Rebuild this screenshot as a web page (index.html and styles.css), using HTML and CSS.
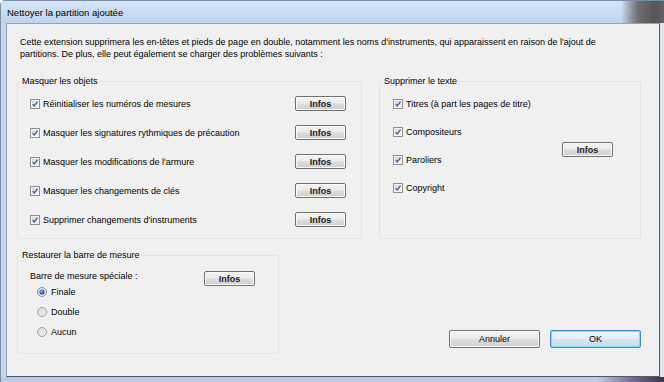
FILE: index.html
```html
<!DOCTYPE html>
<html lang="fr">
<head>
    <meta charset="UTF-8">
    <title>Nettoyer la partition ajoutée</title>
    <link rel="stylesheet" href="styles.css">
</head>
<body>

    <!-- Formes partagées : case à cocher et boutons radio façon Windows 7 -->
    <svg class="defs" width="0" height="0">
        <defs>
            <linearGradient id="boxFill" x1="0" y1="0" x2="1" y2="1">
                <stop offset="0" stop-color="#d3d6da"/>
                <stop offset="1" stop-color="#f7f7f7"/>
            </linearGradient>
            <radialGradient id="dotFill" cx="0.4" cy="0.35" r="0.7">
                <stop offset="0" stop-color="#8fc3f0"/>
                <stop offset="0.5" stop-color="#2f6fbe"/>
                <stop offset="1" stop-color="#1b4a8a"/>
            </radialGradient>
            <symbol id="chk" viewBox="0 0 10 10">
                <rect x="0.5" y="0.5" width="9" height="9" fill="#f4f4f4" stroke="#8e8f8f"/>
                <rect x="2" y="2" width="6" height="6" fill="url(#boxFill)"/>
                <path d="M2.6 5.1 L4.3 7 L7.5 2.6" fill="none" stroke="#4a5f97" stroke-width="1.4"/>
            </symbol>
            <symbol id="radio" viewBox="0 0 10 10">
                <circle cx="5" cy="5" r="4.5" fill="url(#boxFill)" stroke="#a0a0a0"/>
            </symbol>
            <symbol id="radio-on" viewBox="0 0 10 10">
                <circle cx="5" cy="5" r="4.5" fill="url(#boxFill)" stroke="#8e8f8f"/>
                <circle cx="5" cy="5" r="2.6" fill="url(#dotFill)"/>
            </symbol>
        </defs>
    </svg>

    <div class="window">
        <div class="titlebar">Nettoyer la partition ajoutée</div>

        <div class="client">
            <p class="intro">Cette extension supprimera les en-têtes et pieds de page en double, notamment les noms d'instruments, qui apparaissent en raison de l'ajout de<br>partitions. De plus, elle peut également se charger des problèmes suivants :</p>

            <div class="top-row">
                <fieldset class="group group-objects">
                    <legend>Masquer les objets</legend>
                    <div class="opt-row">
                        <label class="check"><svg class="box"><use href="#chk"/></svg>Réinitialiser les numéros de mesures</label>
                        <button class="btn btn-info">Infos</button>
                    </div>
                    <div class="opt-row">
                        <label class="check"><svg class="box"><use href="#chk"/></svg>Masquer les signatures rythmiques de précaution</label>
                        <button class="btn btn-info">Infos</button>
                    </div>
                    <div class="opt-row">
                        <label class="check"><svg class="box"><use href="#chk"/></svg>Masquer les modifications de l'armure</label>
                        <button class="btn btn-info">Infos</button>
                    </div>
                    <div class="opt-row">
                        <label class="check"><svg class="box"><use href="#chk"/></svg>Masquer les changements de clés</label>
                        <button class="btn btn-info">Infos</button>
                    </div>
                    <div class="opt-row">
                        <label class="check"><svg class="box"><use href="#chk"/></svg>Supprimer changements d'instruments</label>
                        <button class="btn btn-info">Infos</button>
                    </div>
                </fieldset>

                <fieldset class="group group-text">
                    <legend>Supprimer le texte</legend>
                    <div class="text-body">
                        <div class="text-list">
                            <label class="check text-row"><svg class="box"><use href="#chk"/></svg>Titres (à part les pages de titre)</label>
                            <label class="check text-row"><svg class="box"><use href="#chk"/></svg>Compositeurs</label>
                            <label class="check text-row"><svg class="box"><use href="#chk"/></svg>Paroliers</label>
                            <label class="check text-row"><svg class="box"><use href="#chk"/></svg>Copyright</label>
                        </div>
                        <button class="btn btn-info btn-text">Infos</button>
                    </div>
                </fieldset>
            </div>

            <div class="bottom-row">
                <fieldset class="group group-bar">
                    <legend>Restaurer la barre de mesure</legend>
                    <div class="bar-body">
                        <div class="bar-list">
                            <div class="bar-label">Barre de mesure spéciale :</div>
                            <label class="radio-row"><svg class="box"><use href="#radio-on"/></svg>Finale</label>
                            <label class="radio-row"><svg class="box"><use href="#radio"/></svg>Double</label>
                            <label class="radio-row"><svg class="box"><use href="#radio"/></svg>Aucun</label>
                        </div>
                        <button class="btn btn-info btn-bar">Infos</button>
                    </div>
                </fieldset>

                <div class="actions">
                    <button class="btn btn-wide">Annuler</button>
                    <button class="btn btn-wide btn-default">OK</button>
                </div>
            </div>
        </div>
    </div>

</body>
</html>
```

FILE: styles.css
```css
/* Fenêtre et cadre Aero */
body {
    margin: 0;
    font-family: 'Liberation Sans', Arial, sans-serif;
    font-size: 9px;
    color: #000;
    overflow: hidden;
}

.defs {
    position: absolute;
}

.window {
    width: 664px;
    height: 382px;
    box-sizing: border-box;
    display: flex;
    flex-direction: column;
    border-top: 1px solid #7d8fa5;
    border-left: 1px solid #7d8fa5;
    border-top-left-radius: 5px;
    background:
        linear-gradient(to right, #b9cde6 0%, #b9cde6 90%, #6c5d8c 96%, #3b3152 100%) bottom / 100% 5px no-repeat,
        linear-gradient(to right, #c4d8ee 0%, #bed2ea 98%, #e2e6ea 99%) ;
}

.titlebar {
    height: 21px;
    flex-shrink: 0;
    padding: 1px 0 0 6px;
    font-size: 9.5px;
    line-height: 21px;
    background:
        linear-gradient(to right, rgba(255,255,255,0) 0%, rgba(255,255,255,0) 93.5%, #707070 96%, #555 98.5%, #626262 100%),
        linear-gradient(#d6e5f4 0%, #c6daef 60%, #bfd4ec 100%);
}

.client {
    flex: 1;
    margin: 0 4px 5px 5px;
    background: #f0f0f0;
    border: 1px solid;
    border-color: #93a3b5 #525c66 #505a64 #93a3b5;
    display: flex;
    flex-direction: column;
    padding: 12px 0 0 0;
}

/* Texte d'introduction */
.intro {
    margin: 0 0 15px 13px;
    line-height: 12px;
}

/* Cadres de groupe */
.group {
    margin: 0;
    min-width: 0;
    border: 1px solid #dfe4e8;
    border-radius: 3px;
    padding: 2px 15px 4px 3px;
}

.group legend {
    padding: 0 1px;
    line-height: 12px;
}

.top-row {
    display: flex;
    gap: 17px;
    margin-left: 10px;
}

.group-objects {
    width: 345px;
    box-sizing: border-box;
}

.group-text {
    width: 262px;
    box-sizing: border-box;
    padding: 3px 27px 4px 3px;
}

/* Lignes de cases à cocher */
.opt-row {
    height: 29px;
    display: flex;
    align-items: center;
    justify-content: space-between;
    padding-left: 9px;
}

.check {
    display: flex;
    align-items: center;
    gap: 3px;
}

.box {
    width: 10px;
    height: 10px;
    flex-shrink: 0;
}

.text-body {
    display: flex;
    justify-content: space-between;
    align-items: flex-start;
    padding-left: 10px;
}

.text-row {
    height: 28px;
}

.btn-text {
    margin-top: 52px;
}

/* Barre de mesure */
.bottom-row {
    display: flex;
    margin: 10px 18px 0 10px;
}

.group-bar {
    width: 262px;
    box-sizing: border-box;
    padding: 9px 23px 11px 3px;
}

.bar-body {
    display: flex;
    justify-content: space-between;
    align-items: flex-start;
    padding-left: 9px;
}

.bar-label {
    line-height: 12px;
}

.radio-row {
    height: 20px;
    display: flex;
    align-items: center;
    gap: 4px;
    padding-left: 7px;
}

.btn-bar {
    margin-top: 1px;
}

/* Boutons */
.btn {
    font-family: 'Liberation Sans', Arial, sans-serif;
    font-size: 9px;
    color: #000;
    padding: 0;
    border: 1px solid #707070;
    border-radius: 2px;
    background: linear-gradient(#f3f3f3 0%, #ebebeb 48%, #dddddd 52%, #cfcfcf 100%);
    box-shadow: inset 0 0 0 1px #fbfbfb;
    cursor: pointer;
}

.btn-info {
    width: 51px;
    height: 15px;
    font-weight: bold;
    line-height: 12px;
    color: #1c1c1c;
}

.actions {
    margin-left: auto;
    align-self: flex-end;
    margin-bottom: 6px;
    display: flex;
    gap: 10px;
}

.btn-wide {
    width: 91px;
    height: 18px;
}

.btn-default {
    border-color: #3c8ec8;
    box-shadow: inset 0 0 0 1px #7fd9f9;
    background: linear-gradient(#eef6fb 0%, #e4eef5 48%, #d5e4ee 52%, #c9dbe7 100%);
}
```
